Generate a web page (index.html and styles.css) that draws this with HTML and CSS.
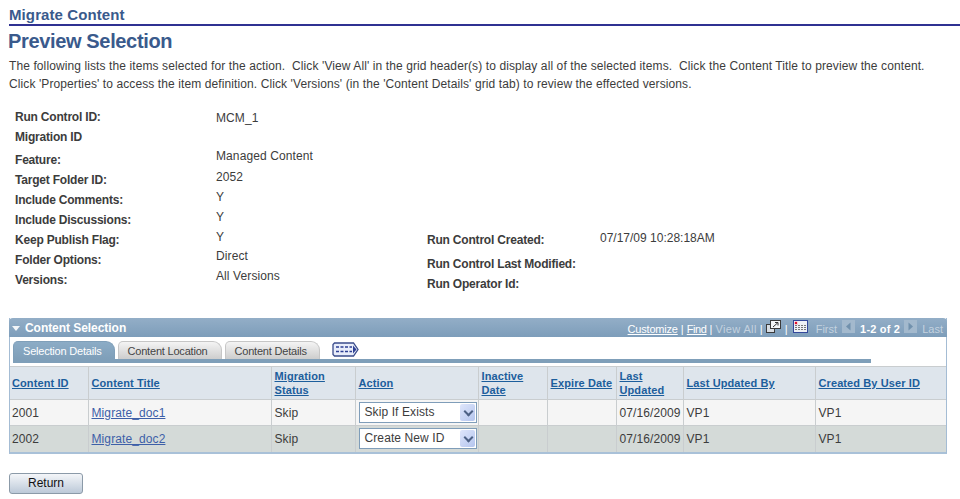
FILE: index.html
```html
<!DOCTYPE html>
<html lang="en">
<head>
    <meta charset="UTF-8">
    <title>Preview Selection</title>
    <link rel="stylesheet" href="styles.css">
</head>
<body>
    <h2 class="crumb">Migrate Content</h2>
    <h1 class="title">Preview Selection</h1>
    <p class="intro">The following lists the items selected for the action.&nbsp; Click 'View All' in the grid header(s) to display all of the selected items.&nbsp; Click the Content Title to preview the content.<br>Click 'Properties' to access the item definition. Click 'Versions' (in the 'Content Details' grid tab) to review the effected versions.</p>

    <div class="info">
        <dl class="fields">
            <div class="row low"><dt>Run Control ID:</dt><dd>MCM_1</dd></div>
            <div class="row gap-after"><dt>Migration ID</dt><dd></dd></div>
            <div class="row high"><dt>Feature:</dt><dd>Managed Content</dd></div>
            <div class="row"><dt>Target Folder ID:</dt><dd>2052</dd></div>
            <div class="row"><dt>Include Comments:</dt><dd>Y</dd></div>
            <div class="row"><dt>Include Discussions:</dt><dd>Y</dd></div>
            <div class="row"><dt>Keep Publish Flag:</dt><dd>Y</dd></div>
            <div class="row high"><dt>Folder Options:</dt><dd>Direct</dd></div>
            <div class="row high"><dt>Versions:</dt><dd>All Versions</dd></div>
        </dl>
        <dl class="fields run">
            <div class="row created"><dt>Run Control Created:</dt><dd>07/17/09 10:28:18AM</dd></div>
            <div class="row"><dt>Run Control Last Modified:</dt><dd></dd></div>
            <div class="row"><dt>Run Operator Id:</dt><dd></dd></div>
        </dl>
    </div>

    <section class="grid">
        <div class="grid-head">
            <h3><span class="arrow"></span>Content Selection</h3>
            <div class="grid-nav">
                <a class="customize" href="#">Customize</a><i>|</i><a class="find" href="#">Find</a><i>|</i><span class="off view-all">View All</span><i>|</i>
                <svg class="ico" width="15" height="13" viewBox="0 0 15 13"><rect x="0.500" y="4.500" width="8" height="8" fill="#d8dde3" stroke="#3a3a3a"/><rect x="4.500" y="0.500" width="10" height="8" fill="#f4f6f8" stroke="#3a3a3a"/><path d="M7 7l4.500-4M9 2.500h3v3" fill="none" stroke="#333"/></svg>
                <i class="after-ico">|</i>
                <svg class="ico cal" width="15" height="13" viewBox="0 0 15 13"><rect x="0.500" y="0.500" width="14" height="12" fill="#eef1f6" stroke="#33489b"/><path d="M2 5.500h11M2 7.500h11M2 9.500h11" stroke="#777" stroke-dasharray="2 1"/><rect x="1.500" y="1.500" width="3" height="3" fill="#e0102a" stroke="#fff" stroke-width=".6"/></svg>
                <span class="off first">First</span>
                <svg class="step" width="13" height="13" viewBox="0 0 13 13"><rect width="13" height="13" fill="#a3b9cd"/><path d="M8.500 2.500v8L4 6.500z" fill="#7191ad"/></svg>
                <b>1-2 of 2</b>
                <svg class="step" width="13" height="13" viewBox="0 0 13 13"><rect width="13" height="13" fill="#a3b9cd"/><path d="M4.500 2.500v8L9 6.500z" fill="#7191ad"/></svg>
                <span class="off last">Last</span>
            </div>
        </div>
        <div class="tab-row">
            <a class="tab active" href="#">Selection Details</a>
            <a class="tab location" href="#">Content Location</a>
            <a class="tab" href="#">Content Details</a>
            <svg class="show-all" width="27" height="15" viewBox="0 0 27 15"><path d="M2.500 1h19l4.500 6.500-4.500 6.500h-19l-1.500-1.500v-10z" fill="#e8edfa" stroke="#3a4c8c" stroke-width="1.300"/><path d="M4 5h16M4 9.500h16" stroke="#2c3f94" stroke-width="1.300" stroke-dasharray="3 1.500"/><path d="M21 3.500v8l3.500-4z" fill="#2c3f94"/></svg>
        </div>
        <div class="strip"></div>
        <table>
            <colgroup>
                <col class="c1"><col class="c2"><col class="c3"><col class="c4"><col class="c5"><col class="c6"><col class="c7"><col class="c8"><col class="c9">
            </colgroup>
            <thead>
                <tr>
                    <th><a href="#">Content ID</a></th>
                    <th><a href="#">Content Title</a></th>
                    <th><a href="#">Migration Status</a></th>
                    <th><a href="#">Action</a></th>
                    <th><a href="#">Inactive Date</a></th>
                    <th><a href="#">Expire Date</a></th>
                    <th><a href="#">Last Updated</a></th>
                    <th><a href="#">Last Updated By</a></th>
                    <th><a href="#">Created By User ID</a></th>
                </tr>
            </thead>
            <tbody>
                <tr>
                    <td>2001</td>
                    <td><a href="#">Migrate_doc1</a></td>
                    <td>Skip</td>
                    <td><div class="select">Skip If Exists<span class="drop"></span></div></td>
                    <td></td>
                    <td></td>
                    <td>07/16/2009</td>
                    <td>VP1</td>
                    <td>VP1</td>
                </tr>
                <tr class="alt">
                    <td>2002</td>
                    <td><a href="#">Migrate_doc2</a></td>
                    <td>Skip</td>
                    <td><div class="select">Create New ID<span class="drop"></span></div></td>
                    <td></td>
                    <td></td>
                    <td>07/16/2009</td>
                    <td>VP1</td>
                    <td>VP1</td>
                </tr>
            </tbody>
        </table>
    </section>

    <button class="btn" type="button">Return</button>
</body>
</html>
```

FILE: styles.css
```css
* {
  margin: 0;
  padding: 0;
  box-sizing: border-box;
}

body {
  width: 960px;
  height: 499px;
  overflow: hidden;
  padding: 7px 0 0 9px;
  background: #fff;
  font-family: "Liberation Sans", Arial, sans-serif;
  font-size: 12px;
  letter-spacing: 0.1px;
  color: #3c3c3c;
}

.crumb {
  height: 19px;
  line-height: 16px;
  font-size: 15px;
  font-weight: bold;
  color: #3a5a8c;
  border-bottom: 2px solid #2f3192;
}

.title {
  margin-top: 3px;
  margin-left: -1px;
  height: 25px;
  line-height: 24px;
  font-size: 20px;
  font-weight: bold;
  letter-spacing: -0.35px;
  color: #3a5a8c;
}

.intro {
  margin-top: 3px;
  line-height: 18px;
}

.info {
  display: flex;
  margin-top: 14px;
  margin-left: 6px;
  height: 211px;
}

.fields {
  width: 412px;
}

.row {
  display: flex;
  height: 20px;
  line-height: 20px;
}

.row dt {
  width: 201px;
  font-weight: bold;
  letter-spacing: -0.2px;
}

.row dd {
  margin-top: -3px;
}

.low dd {
  margin-top: 1px;
}

.high dd {
  margin-top: -4px;
}

.gap-after {
  height: 23px;
}

.run {
  margin-top: 123px;
  width: auto;
}

.run dt {
  width: 173px;
}

.created {
  height: 24px;
}

.created dd {
  margin-top: -2px;
  letter-spacing: 0;
}

.grid {
  width: 938px;
  border-left: 1px solid #a4bcd4;
  border-right: 1px solid #a4bcd4;
  border-bottom: 2px solid #a9c1d8;
}

.grid-head {
  display: flex;
  justify-content: space-between;
  height: 19px;
  margin: 0 -1px;
  padding: 0 4px 0 3px;
  background: linear-gradient(#93aec7, #7d9dba);
  border-radius: 4px 4px 0 0;
  color: #fff;
}

.grid-head h3 {
  display: flex;
  align-items: center;
  font-size: 12px;
  font-weight: bold;
  letter-spacing: -0.05px;
  color: #fff;
}

.arrow {
  width: 0;
  height: 0;
  margin: 2px 5px 0 0;
  border: 4px solid transparent;
  border-top: 5px solid #f2f5f8;
  border-bottom: 0;
}

.grid-nav {
  display: flex;
  align-items: flex-start;
  font-size: 11px;
  letter-spacing: 0;
  line-height: 23px;
  height: 19px;
}

.grid-nav a {
  color: #fff;
}

.grid-nav .customize {
  letter-spacing: -0.2px;
}

.grid-nav .find {
  letter-spacing: -0.4px;
}

.grid-nav .view-all {
  letter-spacing: 0.35px;
}

.grid-nav i {
  margin: 0 3px;
  width: 3px;
  font-style: normal;
}

.grid-nav .after-ico {
  margin: 0 5px 0 4px;
}

.grid-nav .off {
  color: #c4d2df;
}

.ico {
  margin-top: 2px;
}

.grid-nav .first {
  margin-left: 8px;
  margin-right: 5px;
}

.step {
  margin-top: 2px;
}

.grid-nav b {
  margin: 0 4px 0 5px;
  letter-spacing: 0.2px;
  color: #fff;
}

.grid-nav .last {
  margin-left: 5px;
}

.tab-row {
  display: flex;
  align-items: flex-start;
  gap: 3px;
  padding: 4px 0 0 3px;
}

.tab {
  height: 18px;
  padding: 0 12px 0 9px;
  line-height: 18px;
  font-size: 11px;
  letter-spacing: -0.2px;
  color: #444;
  text-decoration: none;
  background: linear-gradient(#f4f4f4, #cdcdcd);
  border: 1px solid #c6c6c6;
  border-bottom: 0;
  border-radius: 5px 9px 0 0;
}

.tab.location {
  padding-right: 13px;
}

.tab.active {
  color: #fff;
  background: linear-gradient(#8cacc6, #7f9fb9);
  border-color: #7f9fb9;
}

.show-all {
  margin: 1px 0 0 9px;
}

.strip {
  width: 858px;
  height: 4px;
  margin: 0 0 3px 3px;
  background: #7f9fb9;
}

table {
  width: 100%;
  border-collapse: collapse;
  table-layout: fixed;
}

.c1 { width: 78px; }
.c2 { width: 183px; }
.c3 { width: 84px; }
.c4 { width: 123px; }
.c5 { width: 69px; }
.c6 { width: 69px; }
.c7 { width: 67px; }
.c8 { width: 132px; }
.c9 { width: 131px; }

th,
td {
  border: 1px solid #c9cdcf;
  padding: 0 2px 0 3px;
  text-align: left;
  vertical-align: middle;
}

tr > :first-child {
  border-left: 0;
  padding-left: 2px;
}

tr > :last-child { border-right: 0; }

th {
  height: 33px;
  line-height: 14px;
  font-size: 11px;
  background: #dee5ec;
}

td {
  height: 26px;
  font-size: 12px;
  background: #f5f5f5;
}

.alt td {
  background: #d4dad8;
  border-bottom: 0;
}

th a {
  color: #1c5e9c;
  font-weight: bold;
}

td a {
  color: #3d5fa8;
}

.select {
  position: relative;
  width: 118px;
  height: 21px;
  padding-left: 5px;
  line-height: 19px;
  background: #fff;
  border: 1px solid #7f9db9;
}

.drop {
  position: absolute;
  right: 1px;
  top: 1px;
  width: 15px;
  height: 17px;
  border-radius: 2px;
  background: linear-gradient(135deg, #dfe6fb, #b4c5ee);
}

.drop::after {
  content: "";
  position: absolute;
  left: 5px;
  top: 4px;
  width: 5px;
  height: 5px;
  border: solid #4d6185;
  border-width: 0 2px 2px 0;
  transform: rotate(45deg);
}

.btn {
  display: block;
  width: 74px;
  height: 21px;
  margin-top: 19px;
  font-family: "Liberation Sans", Arial, sans-serif;
  font-size: 12px;
  color: #111;
  border: 1px solid #8b9aa8;
  border-radius: 3px;
  background: linear-gradient(#f4f6f9, #bcc9d8);
}
```
